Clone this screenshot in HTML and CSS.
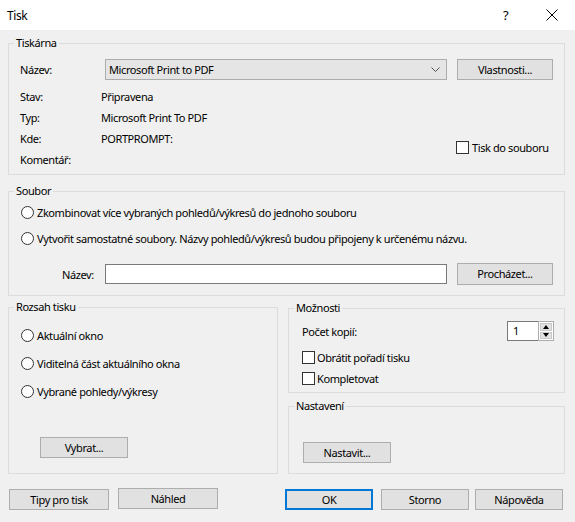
FILE: index.html
```html
<!DOCTYPE html>
<html lang="cs">
<head>
<meta charset="utf-8">
<title>Tisk</title>
<link rel="stylesheet" href="styles.css">
</head>
<body>
<div class="dialog">
  <div class="titlebar">
    <span class="title">Tisk</span>
    <span class="help">?</span>
    <span class="close"><svg width="12" height="12" viewBox="0 0 12 12"><path d="M0.5 0.5L11.5 11.5M11.5 0.5L0.5 11.5" stroke="#000" stroke-width="1" fill="none"/></svg></span>
  </div>
  <div class="body">
    <section class="group g-printer">
      <span class="legend">Tiskárna</span>
      <div class="row-name">
        <span class="lbl-name">Název:</span>
        <div class="combo"><span>Microsoft Print to PDF</span><svg width="9" height="6" viewBox="0 0 9 6"><polyline points="0.5,0.5 4.5,4.5 8.5,0.5" fill="none" stroke="#505050" stroke-width="1"/></svg></div>
        <button class="btn btn-wide">Vlastnosti...</button>
      </div>
      <div class="info">
        <div class="props">
          <span>Stav:</span><span>Připravena</span>
          <span>Typ:</span><span>Microsoft Print To PDF</span>
          <span>Kde:</span><span>PORTPROMPT:</span>
          <span>Komentář:</span><span></span>
        </div>
        <label class="check tofile"><span class="box"></span><span>Tisk do souboru</span></label>
      </div>
    </section>

    <section class="group g-file">
      <span class="legend">Soubor</span>
      <label class="radio-row"><span class="radio"></span><span>Zkombinovat více vybraných pohledů/výkresů do jednoho souboru</span></label>
      <label class="radio-row"><span class="radio"></span><span>Vytvořit samostatné soubory. Názvy pohledů/výkresů budou připojeny k určenému názvu.</span></label>
      <div class="file-name">
        <span class="lbl-file">Název:</span>
        <div class="textbox"></div>
        <button class="btn btn-wide btn-tall">Procházet...</button>
      </div>
    </section>

    <div class="lower">
      <section class="group g-range">
        <span class="legend">Rozsah tisku</span>
        <label class="radio-row r28"><span class="radio"></span><span>Aktuální okno</span></label>
        <label class="radio-row r28"><span class="radio"></span><span>Viditelná část aktuálního okna</span></label>
        <label class="radio-row r28"><span class="radio"></span><span>Vybrané pohledy/výkresy</span></label>
        <button class="btn btn-std btn-select">Vybrat...</button>
      </section>
      <div class="right-col">
        <section class="group g-options">
          <span class="legend">Možnosti</span>
          <div class="copies">
            <span>Počet kopií:</span>
            <div class="spinner">
              <div class="spin-input">1</div>
              <div class="spin-btns">
                <span class="spin-up"><i class="tri-up"></i></span>
                <span class="spin-down"><i class="tri-down"></i></span>
              </div>
            </div>
          </div>
          <label class="check opt"><span class="box"></span><span>Obrátit pořadí tisku</span></label>
          <label class="check opt"><span class="box"></span><span>Kompletovat</span></label>
        </section>
        <section class="group g-setup">
          <span class="legend">Nastavení</span>
          <button class="btn btn-std">Nastavit...</button>
        </section>
      </div>
    </div>

    <div class="footer">
      <button class="btn btn-foot">Tipy pro tisk</button>
      <button class="btn btn-foot btn-up">Náhled</button>
      <button class="btn btn-std btn-ok">OK</button>
      <button class="btn btn-std btn-cancel">Storno</button>
      <button class="btn btn-std btn-helpbtn">Nápověda</button>
    </div>
  </div>
</div>
</body>
</html>
```
FILE: styles.css
```css
* { box-sizing: border-box; }
html, body { margin: 0; padding: 0; }
body {
  width: 575px;
  height: 522px;
  overflow: hidden;
  font-family: "Noto Sans", "Open Sans", sans-serif;
  font-size: 11px;
  letter-spacing: -0.4px;
  color: #000;
  background: #f0f0f0;
}
.dialog { width: 575px; height: 522px; display: flex; flex-direction: column; }

.titlebar {
  height: 30px;
  background: #fff;
  display: flex;
  align-items: center;
  padding-left: 7px;
  font-size: 12px;
}
.title { flex: 1; }
.help { width: 10px; font-size: 13px; margin-right: 33px; }
.close { width: 12px; height: 12px; margin-right: 17px; display: flex; }

.body { flex: 1; background: #f0f0f0; padding: 0 10px 0 8px; }

.group {
  position: relative;
  border: 1px solid #dcdcdc;
}
.legend {
  position: absolute;
  top: -8px;
  left: 5px;
  padding: 0 2px;
  line-height: 14px;
  background: #f0f0f0;
}

/* printer group */
.g-printer { margin-top: 13px; padding: 15px 11px 4px 11px; }
.row-name { display: flex; align-items: center; height: 21px; }
.lbl-name { width: 85px; }
.combo {
  width: 342px;
  height: 21px;
  background: #e5e5e5;
  border: 1px solid #acacac;
  display: flex;
  align-items: center;
  justify-content: space-between;
  padding: 0 6px 0 3px;
}
.combo svg { display: block; }
.btn {
  font-family: inherit;
  font-size: 11px;
  letter-spacing: -0.4px;
  color: #000;
  background: #e1e1e1;
  border: 1px solid #adadad;
  height: 21px;
  padding: 0;
  margin: 0;
  line-height: 18px;
}
.btn-wide { width: 96px; margin-left: 10px; }
.btn-tall { height: 22px; }
.info { display: flex; margin-top: 6px; }
.props {
  flex: 0 0 436px;
  display: grid;
  grid-template-columns: 81px auto;
  grid-auto-rows: 21px;
  align-items: center;
}
.check { display: flex; align-items: center; gap: 3px; white-space: nowrap; }
.box { width: 13px; height: 13px; border: 1px solid #333; background: #fff; flex: none; }
.tofile { flex: none; align-self: flex-end; margin-bottom: 15px; }

/* file group */
.g-file { margin-top: 16px; padding: 7px 11px 10px 12px; }
.radio-row { display: flex; align-items: center; gap: 3px; height: 26px; white-space: nowrap; }
.radio { width: 13px; height: 13px; border: 1px solid #333; border-radius: 50%; background: #fff; flex: none; }
.file-name { display: flex; align-items: center; margin-top: 12px; height: 22px; padding-left: 41px; }
.lbl-file { width: 43px; }
.textbox { width: 342px; height: 20px; background: #fff; border: 1px solid #7a7a7a; }

/* lower */
.lower {
  margin-top: 11px;
  display: grid;
  grid-template-columns: 270px 277px;
  column-gap: 10px;
}
.g-range { padding: 13px 12px 0 12px; }
.r28 { height: 28px; }
.btn-std { width: 88px; }
.btn-select { margin: 32px 0 0 19px; display: block; }
.right-col { padding-top: 1px; display: flex; flex-direction: column; }
.g-options { padding: 12px 10px 3px 13px; }
.copies { display: flex; align-items: center; justify-content: space-between; height: 20px; }
.spinner { display: flex; width: 47px; height: 20px; }
.spin-input {
  width: 31px;
  height: 20px;
  border: 1px solid #7a7a7a;
  border-right: none;
  background: #fff;
  padding-left: 5px;
  line-height: 18px;
}
.spin-btns {
  width: 16px;
  height: 20px;
  border: 1px solid #adadad;
  background: #fff;
  display: flex;
  flex-direction: column;
  gap: 1px;
  padding: 1px;
}
.spin-up, .spin-down {
  flex: 1;
  background: #e1e1e1;
  border: 1px solid #c9c9c9;
  display: flex;
  align-items: center;
  justify-content: center;
}
.tri-up { width: 0; height: 0; border-left: 3px solid transparent; border-right: 3px solid transparent; border-bottom: 4px solid #000; }
.tri-down { width: 0; height: 0; border-left: 3px solid transparent; border-right: 3px solid transparent; border-top: 4px solid #000; }
.opt { height: 21px; gap: 2px; }
.g-options .opt:first-of-type { margin-top: 6px; }
.g-setup { margin-top: 13px; padding: 35px 0 10px 14px; }
.g-setup .btn { display: block; }

/* footer */
.footer { display: flex; align-items: flex-start; margin-top: 15px; padding-left: 1px; }
.btn-foot { width: 100px; }
.btn-foot + .btn-foot { margin-left: 9px; }
.btn-up { margin-top: -1px; }
.btn-ok { margin-left: 67px; border: 2px solid #0078d7; line-height: 17px; }
.btn-cancel { margin-left: 8px; }
.btn-helpbtn { margin-left: 6px; }
```
